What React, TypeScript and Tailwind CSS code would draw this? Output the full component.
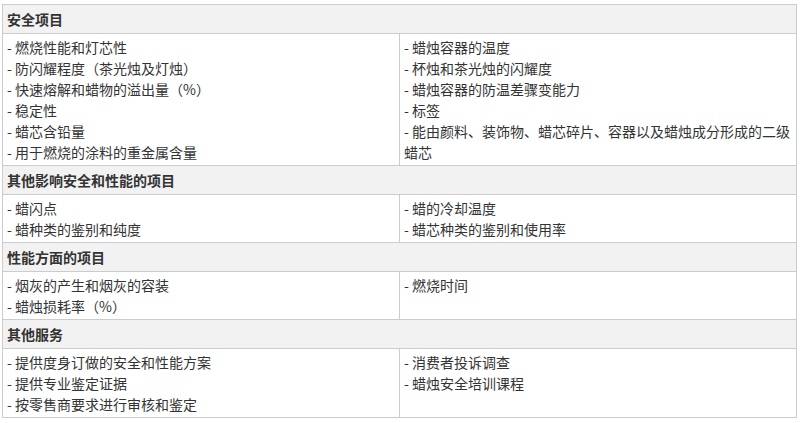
import React from "react";

type Section = { title: string; left: string[]; right: string[] };

const sections: Section[] = [
  {
    title: "安全项目",
    left: [
      "燃烧性能和灯芯性",
      "防闪耀程度（茶光烛及灯烛）",
      "快速熔解和蜡物的溢出量（%）",
      "稳定性",
      "蜡芯含铅量",
      "用于燃烧的涂料的重金属含量",
    ],
    right: [
      "蜡烛容器的温度",
      "杯烛和茶光烛的闪耀度",
      "蜡烛容器的防温差骤变能力",
      "标签",
      "能由颜料、装饰物、蜡芯碎片、容器以及蜡烛成分形成的二级蜡芯",
    ],
  },
  {
    title: "其他影响安全和性能的项目",
    left: ["蜡闪点", "蜡种类的鉴别和纯度"],
    right: ["蜡的冷却温度", "蜡芯种类的鉴别和使用率"],
  },
  {
    title: "性能方面的项目",
    left: ["烟灰的产生和烟灰的容装", "蜡烛损耗率（%）"],
    right: ["燃烧时间"],
  },
  {
    title: "其他服务",
    left: ["提供度身订做的安全和性能方案", "提供专业鉴定证据", "按零售商要求进行审核和鉴定"],
    right: ["消费者投诉调查", "蜡烛安全培训课程"],
  },
];

export default function App() {
  return (
    <div
      className="bg-white w-[803px] h-[423px] pt-[4px] pl-[2px] text-[#333333] text-[14px] leading-[21px]"
      style={{ fontFamily: '"Noto Sans CJK SC", "Noto Sans", sans-serif' }}
    >
      <table className="w-[795px] border-collapse table-fixed">
        <tbody>
          {sections.map((s) => (
            <React.Fragment key={s.title}>
              <tr>
                <td
                  colSpan={2}
                  className="border border-[#cccccc] bg-[#f2f2f2] font-bold pl-[4px] pt-[4px] pb-[3px] align-top"
                >
                  {s.title}
                </td>
              </tr>
              <tr>
                <td className="w-1/2 border border-[#cccccc] pl-[4px] pr-[4px] pt-[3px] pb-[2px] align-top">
                  {s.left.map((t) => (
                    <div key={t}>- {t}</div>
                  ))}
                </td>
                <td className="w-1/2 border border-[#cccccc] pl-[4px] pr-[4px] pt-[3px] pb-[2px] align-top">
                  {s.right.map((t) => (
                    <div key={t}>- {t}</div>
                  ))}
                </td>
              </tr>
            </React.Fragment>
          ))}
        </tbody>
      </table>
    </div>
  );
}
